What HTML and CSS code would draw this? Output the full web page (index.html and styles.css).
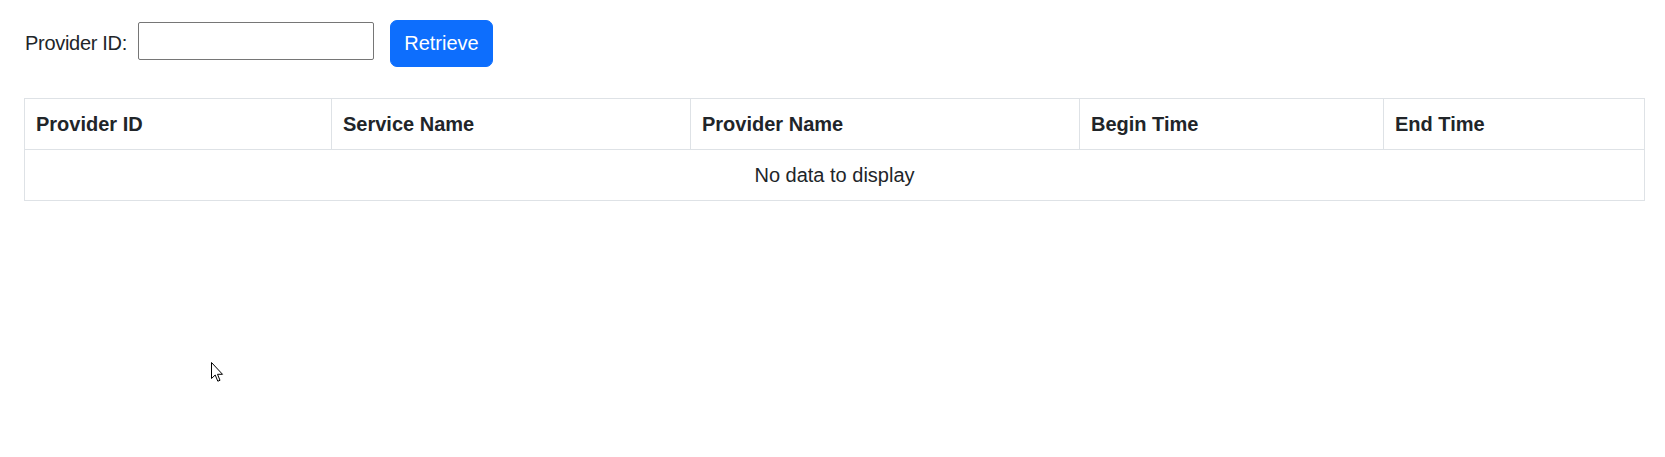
FILE: index.html
```html
<!DOCTYPE html>
<html lang="en">
<head>
<meta charset="utf-8">
<title>Providers</title>
<link rel="stylesheet" href="styles.css">
</head>
<body>
<div class="page">
  <form class="search">
    <label class="search-label" for="pid">Provider ID:</label>
    <input class="search-input" id="pid" type="text">
    <button class="btn-primary" type="button">Retrieve</button>
  </form>
  <table class="grid">
    <thead>
      <tr>
        <th class="c1">Provider ID</th>
        <th class="c2">Service Name</th>
        <th class="c3">Provider Name</th>
        <th class="c4">Begin Time</th>
        <th class="c5">End Time</th>
      </tr>
    </thead>
    <tbody>
      <tr>
        <td class="empty" colspan="5">No data to display</td>
      </tr>
    </tbody>
  </table>
</div>
<svg class="cursor" width="13" height="21" viewBox="0 0 13 21" aria-hidden="true">
  <path d="M0.5 0.5 L0.5 16.5 L4.2 13 L6.8 19.2 L9 18.3 L6.5 12.3 L11.5 12.3 Z" fill="#fff" stroke="#000" stroke-width="1" stroke-linejoin="miter"/>
</svg>
</body>
</html>
```
FILE: styles.css
```css
html, body {
  margin: 0;
  padding: 0;
  background: #fff;
}
body {
  font-family: "Liberation Sans", Arial, sans-serif;
  font-size: 20px;
  line-height: 30px;
  color: #212529;
  width: 1665px;
  height: 457px;
  overflow: hidden;
  position: relative;
}
.page {
  padding: 20px 21px 0 24px;
}
.search {
  display: flex;
  align-items: flex-start;
  margin: 0 0 31px 0;
}
.search-label {
  width: 113px;
  margin: 8px 0 0 1px;
  line-height: 30px;
  height: 30px;
  white-space: nowrap;
  letter-spacing: -0.3px;
}
.search-input {
  box-sizing: border-box;
  width: 236px;
  height: 38px;
  margin: 2px 16px 0 0;
  border: 1px solid #767676;
  border-radius: 2px;
  padding: 1px 3px;
  font: inherit;
  font-size: 16px;
  background: #fff;
}
.btn-primary {
  box-sizing: border-box;
  height: 47px;
  width: 103px;
  padding: 7px 0 8px;
  border: 1px solid #0d6efd;
  border-radius: 7px;
  background: #0d6efd;
  color: #fff;
  font: inherit;
  font-size: 20px;
  line-height: 30px;
  cursor: pointer;
}
.grid {
  border-collapse: collapse;
  table-layout: fixed;
  width: 1620px;
}
.grid th,
.grid td {
  border: 1px solid #dee2e6;
  padding: 10px 11px;
  line-height: 30px;
  height: 30px;
  text-align: left;
  vertical-align: middle;
}
.grid th {
  font-weight: bold;
}
.c1 { width: 284px; }
.c2 { width: 336px; }
.c3 { width: 366px; }
.c4 { width: 281px; }
.c5 { width: 238px; }
.grid td.empty {
  text-align: center;
}
.cursor {
  position: absolute;
  left: 211px;
  top: 362px;
}
```
